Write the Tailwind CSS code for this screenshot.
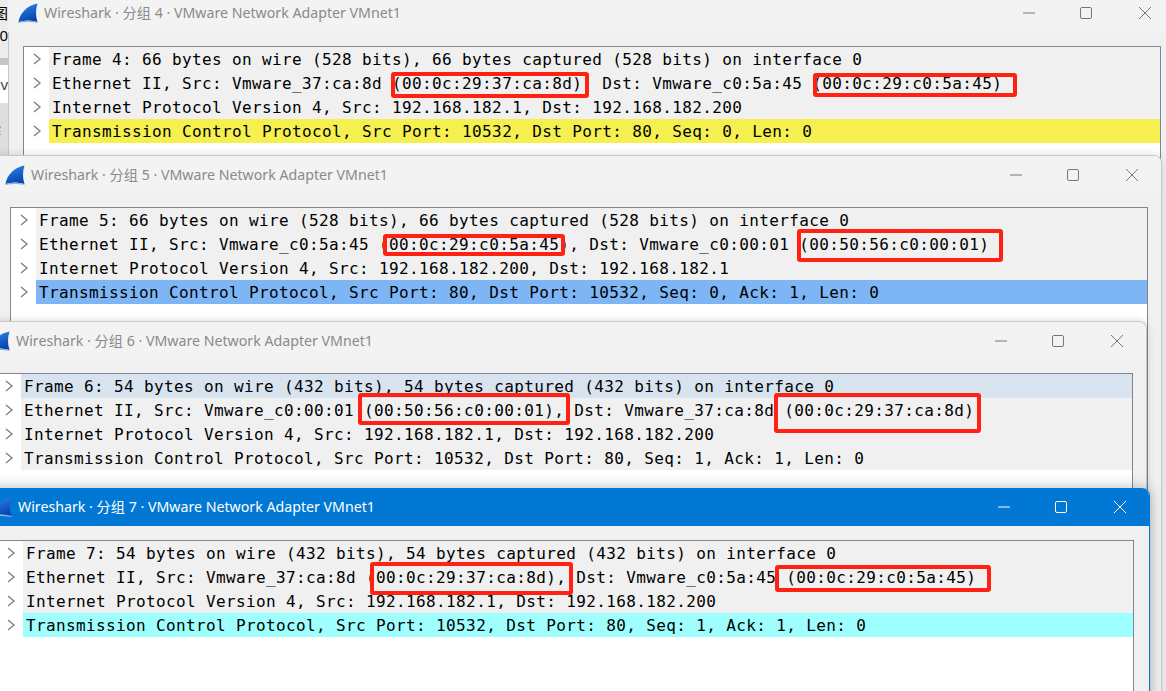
<!DOCTYPE html>
<html lang="en">
<head>
    <meta charset="UTF-8">
    <title>Wireshark packets</title>
    <script src="https://cdn.jsdelivr.net/npm/@tailwindcss/browser@4"></script>
</head>
<body class="bg-[#e4e4e4]">
<div id="desktop" class="relative w-[1166px] h-[691px] overflow-hidden">

    <!-- Desktop behind the windows -->
    <div class="absolute left-0 top-0 w-[8px] h-[155px] flex flex-col overflow-hidden font-['Noto_Sans','Noto_Sans_CJK_SC',sans-serif] text-black">
        <div class="h-[58px] bg-[#ececec] flex flex-col items-end text-[15px]">
            <div class="h-[22px] leading-[26px] whitespace-nowrap">图</div>
            <div class="h-[22px] leading-[26px] whitespace-nowrap">00</div>
        </div>
        <div class="h-[7px] bg-[#c4c4c4]"></div>
        <div class="h-[38px] bg-white flex items-center justify-end text-[15px] text-[#444]">v</div>
        <div class="h-[52px] bg-[#dedede] flex items-center justify-end text-[15px] text-[#555]">纟</div>
    </div>

    <svg class="absolute w-0 h-0"><defs><linearGradient id="fin" x1="0" y1="0" x2="0.4" y2="1"><stop offset="0" stop-color="#2a8cf0"/><stop offset="1" stop-color="#0b45b0"/></linearGradient></defs></svg>

    <div id="windows"></div>

    <!-- Red annotation boxes drawn over the screenshots -->
    <div class="absolute z-10 left-[391px] top-[72px] w-[198px] h-[26px] border-4 border-[#ff2213] rounded-[3px]"></div>
    <div class="absolute z-10 left-[813px] top-[73px] w-[204px] h-[24px] border-4 border-[#ff2213] rounded-[3px]"></div>
    <div class="absolute z-10 left-[383px] top-[234px] w-[182px] h-[22px] border-4 border-[#ff2213] rounded-[3px]"></div>
    <div class="absolute z-10 left-[797px] top-[229px] w-[206px] h-[33px] border-4 border-[#ff2213] rounded-[3px]"></div>
    <div class="absolute z-10 left-[358px] top-[393px] w-[212px] h-[32px] border-4 border-[#ff2213] rounded-[3px]"></div>
    <div class="absolute z-10 left-[774px] top-[393px] w-[207px] h-[40px] border-4 border-[#ff2213] rounded-[3px]"></div>
    <div class="absolute z-10 left-[370px] top-[562px] w-[203px] h-[33px] border-4 border-[#ff2213] rounded-[3px]"></div>
    <div class="absolute z-10 left-[775px] top-[565px] w-[216px] h-[27px] border-4 border-[#ff2213] rounded-[3px]"></div>
</div>

<script>
    const chevron = '<svg viewBox="0 0 10 12" class="w-[10px] h-[12px]"><path d="M2 1L8 6L2 11" fill="none" stroke="currentColor" stroke-width="1.4"/></svg>';
    const shark = '<svg viewBox="0 0 20 20" class="w-[20px] h-[20px] shrink-0"><path d="M0.5 19C2 10 9 2.5 19.5 0.5C17.5 6.5 17.5 13 19.5 19C13 17 7 17 0.5 19Z" fill="url(#fin)"/><path d="M0.5 19C7 17 13 17 19.5 19L19.5 20C13 18.5 7 18.5 0.5 20Z" fill="#8fb4dc"/></svg>';

    const packets = [
        {
            frame: 'w-[1167px] left-[8px] top-[-6px] h-[720px] bg-[#f0f0f0] shadow-[inset_1px_0_0_#c8c8c8]',
            bar: 'h-[38px] bg-[#f3f3f3] text-[#8a8a8a]', closeWidth: 'w-[60px]', controls: 'text-[#777]', box: 'mr-[14px]',
            title: 'Wireshark · 分组 4 · VMware Network Adapter VMnet1',
            rows: [
                ['bg-[#f0f0f0]', 'Frame 4: 66 bytes on wire (528 bits), 66 bytes captured (528 bits) on interface 0'],
                ['bg-[#f0f0f0]', 'Ethernet II, Src: Vmware_37:ca:8d (00:0c:29:37:ca:8d), Dst: Vmware_c0:5a:45 (00:0c:29:c0:5a:45)'],
                ['bg-[#f0f0f0]', 'Internet Protocol Version 4, Src: 192.168.182.1, Dst: 192.168.182.200'],
                ['bg-[#f5f04f]', 'Transmission Control Protocol, Src Port: 10532, Dst Port: 80, Seq: 0, Len: 0']
            ]
        },
        {
            frame: 'w-[1167px] left-[-5px] top-[155px] h-[600px] bg-[#f0f0f0] border-t border-r border-[#c8c8c8] shadow-[0_0_8px_rgba(0,0,0,0.15)]',
            bar: 'h-[37px] bg-[#f3f3f3] text-[#8a8a8a]', closeWidth: 'w-[59px]', controls: 'text-[#777]', box: 'mr-[13px]',
            title: 'Wireshark · 分组 5 · VMware Network Adapter VMnet1',
            rows: [
                ['bg-[#f0f0f0]', 'Frame 5: 66 bytes on wire (528 bits), 66 bytes captured (528 bits) on interface 0'],
                ['bg-[#f0f0f0]', 'Ethernet II, Src: Vmware_c0:5a:45 (00:0c:29:c0:5a:45), Dst: Vmware_c0:00:01 (00:50:56:c0:00:01)'],
                ['bg-[#f0f0f0]', 'Internet Protocol Version 4, Src: 192.168.182.200, Dst: 192.168.182.1'],
                ['bg-[#7eb5f5]', 'Transmission Control Protocol, Src Port: 80, Dst Port: 10532, Seq: 0, Ack: 1, Len: 0']
            ]
        },
        {
            frame: 'w-[1167px] left-[-20px] top-[321px] h-[460px] bg-[#f0f0f0] border-t border-r border-[#c8c8c8] shadow-[0_0_8px_rgba(0,0,0,0.15)]',
            bar: 'h-[37px] bg-[#f3f3f3] text-[#8a8a8a]', closeWidth: 'w-[59px]', controls: 'text-[#777]', box: 'mr-[13px]',
            title: 'Wireshark · 分组 6 · VMware Network Adapter VMnet1',
            rows: [
                ['bg-[#d7e4f0]', 'Frame 6: 54 bytes on wire (432 bits), 54 bytes captured (432 bits) on interface 0'],
                ['bg-[#f0f0f0]', 'Ethernet II, Src: Vmware_c0:00:01 (00:50:56:c0:00:01), Dst: Vmware_37:ca:8d (00:0c:29:37:ca:8d)'],
                ['bg-[#f0f0f0]', 'Internet Protocol Version 4, Src: 192.168.182.1, Dst: 192.168.182.200'],
                ['bg-[#f0f0f0]', 'Transmission Control Protocol, Src Port: 10532, Dst Port: 80, Seq: 1, Ack: 1, Len: 0']
            ]
        },
        {
            frame: 'w-[1168px] left-[-18px] top-[488px] h-[300px] bg-[#f0f0f0] border-r border-[#0078d4] shadow-[0_0_14px_rgba(0,0,0,0.28)]',
            bar: 'h-[38px] bg-[#0078d4] text-white', closeWidth: 'w-[59px]', controls: 'text-white', box: 'mr-[15px]',
            title: 'Wireshark · 分组 7 · VMware Network Adapter VMnet1',
            rows: [
                ['bg-[#f0f0f0]', 'Frame 7: 54 bytes on wire (432 bits), 54 bytes captured (432 bits) on interface 0'],
                ['bg-[#f0f0f0]', 'Ethernet II, Src: Vmware_37:ca:8d (00:0c:29:37:ca:8d), Dst: Vmware_c0:5a:45 (00:0c:29:c0:5a:45)'],
                ['bg-[#f0f0f0]', 'Internet Protocol Version 4, Src: 192.168.182.1, Dst: 192.168.182.200'],
                ['bg-[#9fffff]', 'Transmission Control Protocol, Src Port: 10532, Dst Port: 80, Seq: 1, Ack: 1, Len: 0']
            ]
        }
    ];

    document.getElementById('windows').innerHTML = packets.map(p => `
        <div class="absolute ${p.frame} rounded-t-lg flex flex-col overflow-hidden">
            <div class="${p.bar} shrink-0 flex items-center pl-[10px] text-[14.2px] font-['Noto_Sans','Noto_Sans_CJK_SC',sans-serif]">
                ${shark}
                <span class="ml-[6px] whitespace-nowrap">${p.title}</span>
                <div class="ml-auto flex ${p.controls}">
                    <div class="w-[57px] flex justify-center"><svg viewBox="0 0 14 14" class="w-[14px] h-[14px]"><path d="M1 7H13" stroke="currentColor"/></svg></div>
                    <div class="w-[58px] flex justify-center"><svg viewBox="0 0 14 14" class="w-[14px] h-[14px]"><rect x="1.5" y="1.5" width="11" height="11" rx="1.5" fill="none" stroke="currentColor"/></svg></div>
                    <div class="${p.closeWidth} flex justify-center"><svg viewBox="0 0 14 14" class="w-[14px] h-[14px]"><path d="M1 1L13 13M13 1L1 13" stroke="currentColor"/></svg></div>
                </div>
            </div>
            <div class="ml-[15px] ${p.box} mt-[14px] flex-1 bg-white border border-[#7f8593] font-['DejaVu_Sans_Mono',monospace] text-[16px] tracking-[0.37px] text-black whitespace-nowrap">
                ${p.rows.map(([bg, text]) => `
                    <div class="h-6 flex">
                        <div class="w-[25px] shrink-0 flex items-center justify-center text-[#808080]">${chevron}</div>
                        <div class="flex-1 ${bg} pl-[3px] leading-[26px]">${text}</div>
                    </div>`).join('')}
            </div>
        </div>`).join('');
</script>
</body>
</html>
